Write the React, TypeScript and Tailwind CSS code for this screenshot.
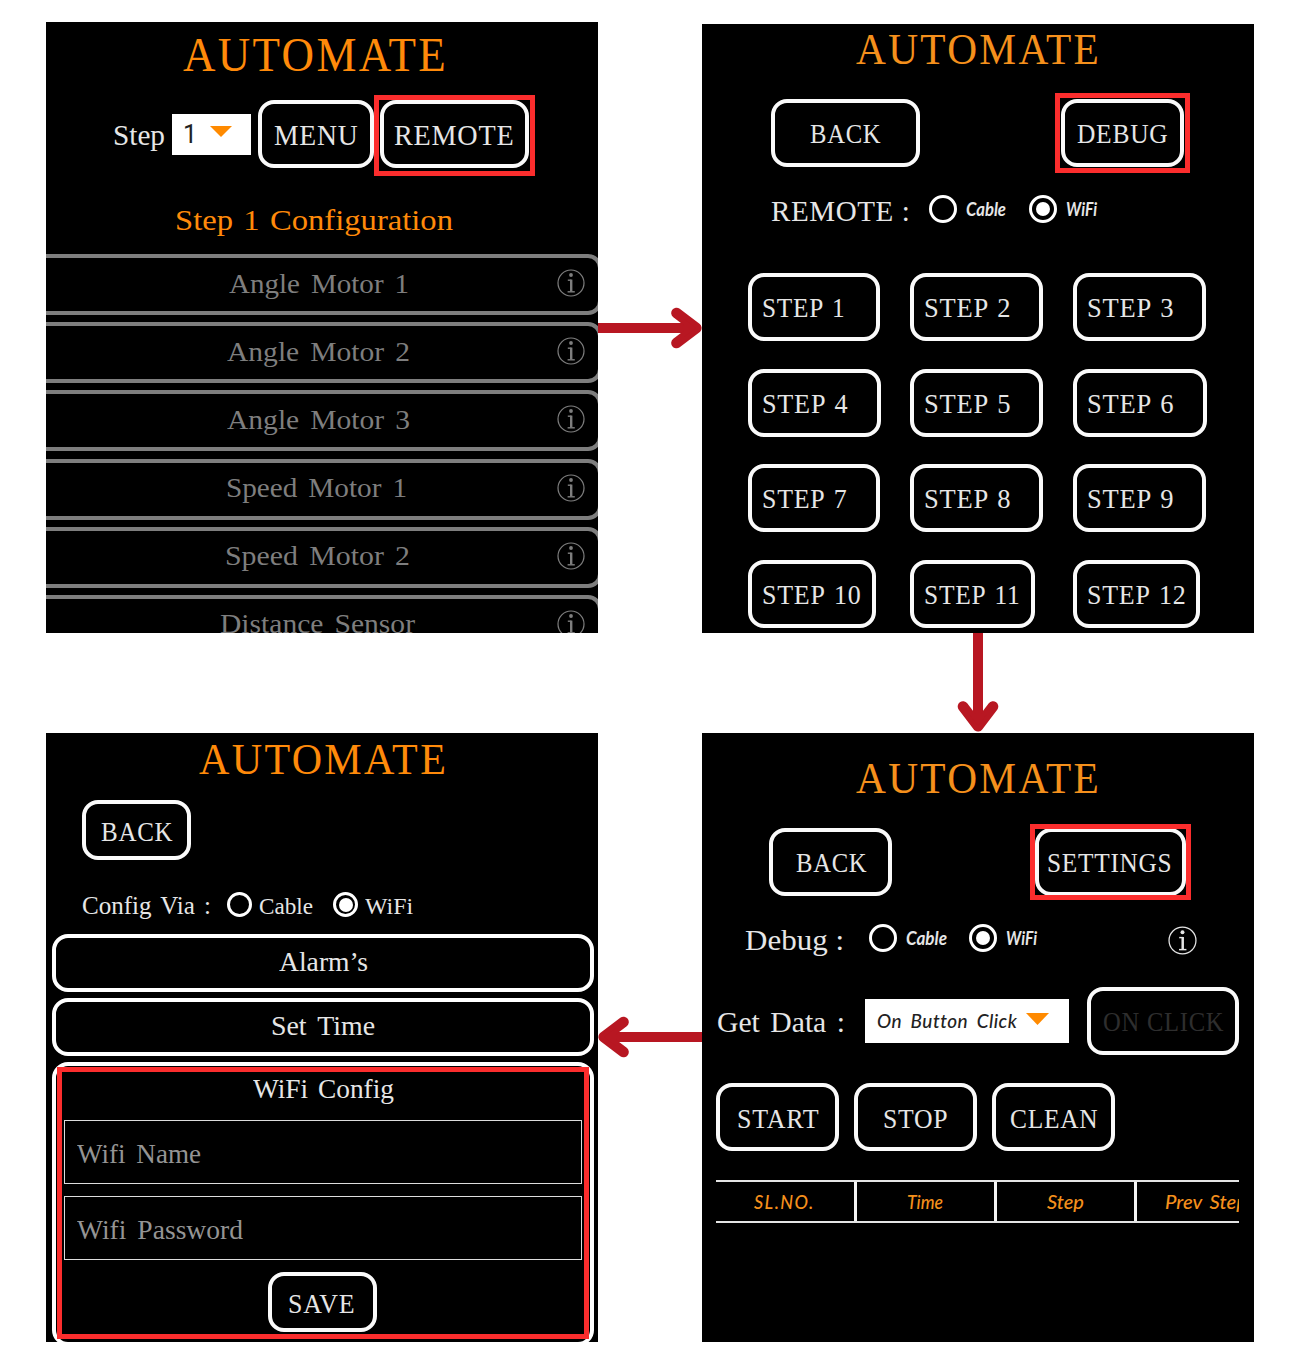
import { useLayoutEffect, useRef, type ReactNode } from "react";

/** One line of text, stretched horizontally to fill the width its class names give it. */
function Fit({ className, children }: { className: string; children: string }) {
  const inner = useRef<HTMLSpanElement>(null);
  useLayoutEffect(() => {
    const el = inner.current;
    if (!el || !el.parentElement) return;
    el.style.transform = "none";
    const tracking = parseFloat(getComputedStyle(el).letterSpacing) || 0;
    const natural = el.getBoundingClientRect().width - tracking / 2;
    const room = el.parentElement.getBoundingClientRect().width;
    el.style.transform = `scaleX(${room / natural})`;
  }, [children]);
  return (
    <span className={`block shrink-0 text-left leading-none whitespace-nowrap ${className}`}>
      <span ref={inner} className="inline-block origin-left">
        {children}
      </span>
    </span>
  );
}

function Button({
  className,
  highlight,
  children,
}: {
  className: string;
  highlight?: string;
  children: ReactNode;
}) {
  return (
    <button
      className={`relative flex shrink-0 items-center rounded-[16px] border-4 border-[#fafafa] tracking-[0.8px] text-[#e6e6e6] ${className}`}
    >
      {children}
      {highlight && <span className={`absolute border-[#fb2d2d] ${highlight}`} />}
    </button>
  );
}

function Radio({ checked, className }: { checked?: boolean; className: string }) {
  return (
    <span
      className={`flex shrink-0 items-center justify-center rounded-full border-[3px] border-white ${className}`}
    >
      {checked && <span className="size-[14px] rounded-full bg-white" />}
    </span>
  );
}

function Info({ className }: { className: string }) {
  return (
    <svg viewBox="0 0 28 28" className={`shrink-0 ${className}`} fill="none" stroke="currentColor">
      <circle cx="14" cy="14" r="13" strokeWidth="1.2" />
      <circle cx="14" cy="6" r="1.9" fill="currentColor" stroke="none" />
      <path d="M10.8 11.2h3.6" strokeWidth="1.4" />
      <path d="M14.2 10.6v12" strokeWidth="2.4" />
      <path d="M10.6 22.8h7.2" strokeWidth="1.4" />
    </svg>
  );
}

function Caret({ className }: { className: string }) {
  return (
    <svg viewBox="0 0 24 12" preserveAspectRatio="none" className={`shrink-0 ${className}`}>
      <path d="M0 0h24L12 12z" fill="#ff8a00" />
    </svg>
  );
}

const sensors = [
  { name: "Angle Motor 1", pos: "ml-[193px] w-[180px]", end: "ml-[148px]" },
  { name: "Angle Motor 2", pos: "ml-[191px] w-[183px]", end: "ml-[147px]" },
  { name: "Angle Motor 3", pos: "ml-[191px] w-[183px]", end: "ml-[147px]" },
  { name: "Speed Motor 1", pos: "ml-[190px] w-[181px]", end: "ml-[150px]" },
  { name: "Speed Motor 2", pos: "ml-[189px] w-[185px]", end: "ml-[147px]" },
  { name: "Distance Sensor", pos: "ml-[184px] w-[195px]", end: "ml-[142px]" },
];

function StepConfig() {
  return (
    <section className="h-[611px] overflow-hidden bg-black">
      <div className="flex h-[66px] items-center pl-[137px]">
        <Fit className="w-[264px] text-[48px] tracking-[2.5px] text-[#ff8a0a]">AUTOMATE</Fit>
      </div>
      <div className="mt-[12px] flex h-[68px] items-center pl-[67px]">
        <Fit className="w-[52px] pt-[3px] text-[29px] text-[#e6e6e6]">Step</Fit>
        <div className="ml-[7px] flex h-[41px] w-[79px] items-center bg-white pl-[11px]">
          <span className="w-[27px] font-['Roboto'] text-[25px] leading-none text-[#222]">1</span>
          <Caret className="mb-[5px] h-[11px] w-[22px]" />
        </div>
        <Button className="ml-[7px] h-[68px] w-[116px] pt-[3px] pl-[12px]">
          <Fit className="w-[84px] text-[29px]">MENU</Fit>
        </Button>
        <Button
          className="ml-[6px] h-[68px] w-[149px] pt-[3px] pl-[10px]"
          highlight="-inset-x-[10px] -top-[9px] -bottom-[12px] border-[5px]"
        >
          <Fit className="w-[120px] text-[29px]">REMOTE</Fit>
        </Button>
      </div>
      <div className="mt-[31px] flex h-[42px] items-center pl-[129px]">
        <Fit className="w-[278px] text-[30px] [word-spacing:2px] text-[#ff8a0a]">
          Step 1 Configuration
        </Fit>
      </div>
      <div className="mt-[13px] -mr-[4px] -ml-[14px] flex flex-col gap-[7.2px]">
        {sensors.map((s) => (
          <div
            key={s.name}
            className="flex h-[61px] shrink-0 items-center rounded-[14px] border-4 border-[#7e7e7e] pb-[3px] text-[#7e7e7e]"
          >
            <Fit className={`pt-px text-[28px] [word-spacing:3.5px] ${s.pos}`}>{s.name}</Fit>
            <Info className={`size-[28px] ${s.end}`} />
          </div>
        ))}
      </div>
    </section>
  );
}

const steps = [
  { name: "STEP 1", box: "w-[132px]", text: "w-[83px]" },
  { name: "STEP 2", box: "w-[133px]", text: "w-[87px]" },
  { name: "STEP 3", box: "w-[133px]", text: "w-[87px]" },
  { name: "STEP 4", box: "w-[133px]", text: "w-[86px]" },
  { name: "STEP 5", box: "w-[133px]", text: "w-[87px]" },
  { name: "STEP 6", box: "w-[134px]", text: "w-[87px]" },
  { name: "STEP 7", box: "w-[132px]", text: "w-[85px]" },
  { name: "STEP 8", box: "w-[133px]", text: "w-[87px]" },
  { name: "STEP 9", box: "w-[133px]", text: "w-[87px]" },
  { name: "STEP 10", box: "w-[128px]", text: "w-[99px]" },
  { name: "STEP 11", box: "w-[125px]", text: "w-[96px]" },
  { name: "STEP 12", box: "w-[127px]", text: "w-[99px]" },
];

function Remote() {
  return (
    <section className="mt-[2px] h-[609px] overflow-hidden bg-black">
      <div className="flex h-[51px] items-center pl-[154px]">
        <Fit className="w-[244px] text-[45px] tracking-[2.5px] text-[#f5901c]">AUTOMATE</Fit>
      </div>
      <div className="mt-[24px] flex h-[68px] items-center pl-[69px]">
        <Button className="h-[68px] w-[149px] pt-[3px] pl-[35px]">
          <Fit className="w-[71px] text-[27px]">BACK</Fit>
        </Button>
        <Button
          className="ml-[141px] h-[68px] w-[123px] pt-[3px] pl-[12px]"
          highlight="-inset-x-[10px] -top-[10px] -bottom-[10px] border-[5px]"
        >
          <Fit className="w-[91px] text-[27px]">DEBUG</Fit>
        </Button>
      </div>
      <div className="mt-[28px] flex h-[28px] items-center pl-[69px] text-[#e6e6e6]">
        <Fit className="w-[139px] pt-[4px] text-[29px] tracking-[0.6px]">REMOTE :</Fit>
        <Radio className="ml-[19px] size-[28px]" />
        <Fit className="ml-[9px] w-[40px] font-['Lato'] text-[18px] font-bold italic">Cable</Fit>
        <Radio checked className="ml-[23px] size-[28px]" />
        <Fit className="ml-[9px] w-[31px] font-['Lato'] text-[18px] font-bold italic">WiFi</Fit>
      </div>
      <div className="mt-[50px] ml-[46px] grid grid-cols-[162px_163px_140px] gap-y-[27.5px]">
        {steps.map((s) => (
          <Button key={s.name} className={`h-[68px] pt-[3px] pl-[10px] ${s.box}`}>
            <Fit className={`text-[27px] [word-spacing:2px] ${s.text}`}>{s.name}</Fit>
          </Button>
        ))}
      </div>
    </section>
  );
}

function WifiSettings() {
  return (
    <section className="h-[609px] overflow-hidden bg-black text-[#e6e6e6]">
      <div className="flex h-[52px] items-center pl-[153px]">
        <Fit className="w-[248px] text-[45px] tracking-[2.5px] text-[#ff8a0a]">AUTOMATE</Fit>
      </div>
      <div className="mt-[15px] flex pl-[36px]">
        <Button className="h-[60px] w-[109px] pt-[4px] pl-[15px]">
          <Fit className="w-[72px] text-[27px]">BACK</Fit>
        </Button>
      </div>
      <div className="mt-[32px] flex h-[25px] items-center pl-[36px]">
        <Fit className="w-[129px] pt-[2px] text-[26px] [word-spacing:3px]">Config Via :</Fit>
        <Radio className="ml-[16px] size-[25px]" />
        <Fit className="ml-[7px] w-[54px] pt-[2px] text-[24px]">Cable</Fit>
        <Radio checked className="ml-[20px] size-[25px]" />
        <Fit className="ml-[7px] w-[48px] pt-[2px] text-[24px]">WiFi</Fit>
      </div>
      <div className="mt-[17px] mr-[4px] ml-[6px] flex flex-col gap-[6px]">
        <div className="flex h-[58px] items-center rounded-[16px] border-4 border-white pb-[2px] pl-[223px]">
          <Fit className="w-[89px] text-[27px]">Alarm’s</Fit>
        </div>
        <div className="flex h-[58px] items-center rounded-[16px] border-4 border-white pb-[2px] pl-[215px]">
          <Fit className="w-[104px] text-[27px] [word-spacing:4px]">Set Time</Fit>
        </div>
        <div className="relative h-[284px] rounded-[16px] border-4 border-white px-[8px]">
          <Fit className="mt-[10px] ml-[189px] w-[141px] text-[27px] [word-spacing:3px]">
            WiFi Config
          </Fit>
          <div className="mt-[17px] flex h-[64px] items-center border-[1.5px] border-[#ddd] pt-[4px] pl-[12px] text-[#949494]">
            <Fit className="w-[124px] text-[27px] [word-spacing:4px]">Wifi Name</Fit>
          </div>
          <div className="mt-[12px] flex h-[64px] items-center border-[1.5px] border-[#ddd] pt-[4px] pl-[12px] text-[#949494]">
            <Fit className="w-[166px] text-[27px] [word-spacing:4px]">Wifi Password</Fit>
          </div>
          <Button className="mt-[12px] ml-[204px] h-[60px] w-[109px] pt-[4px] pl-[16px]">
            <Fit className="w-[67px] text-[27px]">SAVE</Fit>
          </Button>
          <span className="absolute top-px right-[1px] bottom-[3px] left-px border-[5px] border-[#fb2d2d]" />
        </div>
      </div>
    </section>
  );
}

function Debug() {
  return (
    <section className="h-[609px] overflow-hidden bg-black text-[#e6e6e6]">
      <div className="mt-[19px] flex h-[52px] items-center pl-[154px]">
        <Fit className="w-[244px] text-[45px] tracking-[2.5px] text-[#f5901c]">AUTOMATE</Fit>
      </div>
      <div className="mt-[24px] flex h-[68px] items-center pl-[67px]">
        <Button className="h-[68px] w-[123px] pt-[3px] pl-[23px]">
          <Fit className="w-[71px] text-[27px]">BACK</Fit>
        </Button>
        <Button
          className="ml-[143px] h-[68px] w-[151px] pt-[3px] pl-[8px]"
          highlight="-left-[9px] -right-[9px] -top-[8px] -bottom-[8px] border-[5px]"
        >
          <Fit className="w-[125px] text-[27px]">SETTINGS</Fit>
        </Button>
      </div>
      <div className="mt-[28px] flex h-[28px] items-center pl-[43px]">
        <Fit className="w-[99px] pt-[4px] text-[29px]">Debug :</Fit>
        <Radio className="ml-[25px] size-[28px]" />
        <Fit className="ml-[9px] w-[41px] font-['Lato'] text-[18px] font-bold italic">Cable</Fit>
        <Radio checked className="ml-[22px] size-[28px]" />
        <Fit className="ml-[9px] w-[31px] font-['Lato'] text-[18px] font-bold italic">WiFi</Fit>
        <Info className="mt-[5px] ml-[131px] size-[29px]" />
      </div>
      <div className="mt-[35px] flex h-[68px] items-center pl-[15px]">
        <Fit className="w-[128px] pt-[2px] text-[29px] [word-spacing:3px]">Get Data :</Fit>
        <div className="ml-[20px] flex h-[44px] w-[204px] items-center bg-white pl-[12px]">
          <Fit className="w-[140px] pb-[2px] font-['Lato'] text-[20px] font-medium tracking-[0.5px] text-[#222] italic [word-spacing:4px]">
            On Button Click
          </Fit>
          <Caret className="mb-[4px] ml-[9px] h-[12px] w-[23px]" />
        </div>
        <Button className="ml-[18px] h-[68px] w-[152px] pt-[3px] pl-[12px]">
          <Fit className="w-[121px] text-[27px] text-[#2e2e2e]">ON CLICK</Fit>
        </Button>
      </div>
      <div className="mt-[28px] flex h-[68px] items-center gap-[15px] pl-[14px]">
        <Button className="h-[68px] w-[123px] pt-[4px] pl-[17px]">
          <Fit className="w-[82px] text-[27px]">START</Fit>
        </Button>
        <Button className="h-[68px] w-[123px] pt-[4px] pl-[25px]">
          <Fit className="w-[65px] text-[27px]">STOP</Fit>
        </Button>
        <Button className="h-[68px] w-[123px] pt-[4px] pl-[14px]">
          <Fit className="w-[88px] text-[27px]">CLEAN</Fit>
        </Button>
      </div>
      <div className="mt-[29px] ml-[14px] flex h-[43px] w-[523px] overflow-hidden border-y-2 border-[#e4e4e4] font-['Lato'] text-[19px] font-medium text-[#f5901c] italic">
        <div className="flex w-[141px] shrink-0 items-center border-r-[3px] border-[#f4f4f4] pl-[38px]">
          <Fit className="w-[60px] tracking-[1.5px]">SL.NO.</Fit>
        </div>
        <div className="flex w-[140px] shrink-0 items-center border-r-[3px] border-[#f4f4f4] pl-[50px]">
          <Fit className="w-[36px]">Time</Fit>
        </div>
        <div className="flex w-[140px] shrink-0 items-center border-r-[3px] border-[#f4f4f4] pl-[50px]">
          <Fit className="w-[37px]">Step</Fit>
        </div>
        <div className="flex w-[140px] shrink-0 items-center pl-[28px]">
          <Fit className="w-[82px] [word-spacing:3px]">Prev Step</Fit>
        </div>
      </div>
    </section>
  );
}

/** Right-pointing flow arrow; the other directions are rotations of it. */
function Arrow({ className }: { className: string }) {
  return (
    <svg
      viewBox="0 0 104 42"
      className={`absolute h-[42px] w-[104px] ${className}`}
      fill="none"
      stroke="#b81722"
      strokeWidth="10"
    >
      <path d="M0 21H94" />
      <path d="M78.5 6L98.3 21L78.5 36" strokeLinecap="round" strokeLinejoin="round" strokeWidth="10.6" />
      <path d="M86 12L98 21L86 30z" fill="#b81722" stroke="none" />
    </svg>
  );
}

export default function App() {
  return (
    <main className="relative h-[1364px] w-[1300px] overflow-hidden bg-white font-['Liberation_Serif',serif]">
      <div className="grid grid-cols-[552px_552px] gap-x-[104px] gap-y-[100px] pt-[22px] pl-[46px]">
        <StepConfig />
        <Remote />
        <WifiSettings />
        <Debug />
      </div>
      <Arrow className="top-[307px] left-[598px]" />
      <div className="absolute top-[633px] left-[957px] h-[100px] w-[42px] overflow-hidden">
        <Arrow className="-top-[42px] left-0 translate-y-[-5px] rotate-90 [transform-origin:0_42px]" />
      </div>
      <Arrow className="top-[1016px] left-[598px] rotate-180" />
    </main>
  );
}
